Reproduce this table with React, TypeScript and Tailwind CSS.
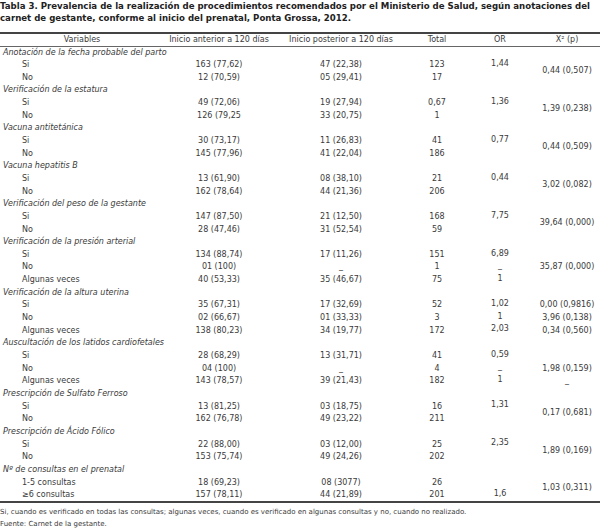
import React from "react";

type Row = { label: string; c1: string; c2: string; total: string; or: string; x2?: string };
type Group = { title: string; rows: Row[]; span?: string };

const groups: Group[] = [
  {
    title: "Anotación de la fecha probable del parto",
    rows: [
      { label: "Si", c1: "163 (77,62)", c2: "47 (22,38)", total: "123", or: "1,44" },
      { label: "No", c1: "12 (70,59)", c2: "05 (29,41)", total: "17", or: "" },
    ],
    span: "0,44 (0,507)",
  },
  {
    title: "Verificación de la estatura",
    rows: [
      { label: "Si", c1: "49 (72,06)", c2: "19 (27,94)", total: "0,67", or: "1,36" },
      { label: "No", c1: "126 (79,25", c2: "33 (20,75)", total: "1", or: "" },
    ],
    span: "1,39 (0,238)",
  },
  {
    title: "Vacuna antitetánica",
    rows: [
      { label: "Si", c1: "30 (73,17)", c2: "11 (26,83)", total: "41", or: "0,77" },
      { label: "No", c1: "145 (77,96)", c2: "41 (22,04)", total: "186", or: "" },
    ],
    span: "0,44 (0,509)",
  },
  {
    title: "Vacuna hepatitis B",
    rows: [
      { label: "Si", c1: "13 (61,90)", c2: "08 (38,10)", total: "21", or: "0,44" },
      { label: "No", c1: "162 (78,64)", c2: "44 (21,36)", total: "206", or: "" },
    ],
    span: "3,02 (0,082)",
  },
  {
    title: "Verificación del peso de la gestante",
    rows: [
      { label: "Si", c1: "147 (87,50)", c2: "21 (12,50)", total: "168", or: "7,75" },
      { label: "No", c1: "28 (47,46)", c2: "31 (52,54)", total: "59", or: "" },
    ],
    span: "39,64 (0,000)",
  },
  {
    title: "Verificación de la presión arterial",
    rows: [
      { label: "Si", c1: "134 (88,74)", c2: "17 (11,26)", total: "151", or: "6,89" },
      { label: "No", c1: "01 (100)", c2: "_", total: "1", or: "_" },
      { label: "Algunas veces", c1: "40 (53,33)", c2: "35 (46,67)", total: "75", or: "1" },
    ],
    span: "35,87 (0,000)",
  },
  {
    title: "Verificación de la altura uterina",
    rows: [
      { label: "Si", c1: "35 (67,31)", c2: "17 (32,69)", total: "52", or: "1,02", x2: "0,00 (0,9816)" },
      { label: "No", c1: "02 (66,67)", c2: "01 (33,33)", total: "3", or: "1", x2: "3,96 (0,138)" },
      { label: "Algunas veces", c1: "138 (80,23)", c2: "34 (19,77)", total: "172", or: "2,03", x2: "0,34 (0,560)" },
    ],
  },
  {
    title: "Auscultación de los latidos cardiofetales",
    rows: [
      { label: "Si", c1: "28 (68,29)", c2: "13 (31,71)", total: "41", or: "0,59", x2: "" },
      { label: "No", c1: "04 (100)", c2: "_", total: "4", or: "_", x2: "1,98 (0,159)" },
      { label: "Algunas veces", c1: "143 (78,57)", c2: "39 (21,43)", total: "182", or: "1", x2: "_" },
    ],
  },
  {
    title: "Prescripción de Sulfato Ferroso",
    rows: [
      { label: "Si", c1: "13 (81,25)", c2: "03 (18,75)", total: "16", or: "1,31" },
      { label: "No", c1: "162 (76,78)", c2: "49 (23,22)", total: "211", or: "" },
    ],
    span: "0,17 (0,681)",
  },
  {
    title: "Prescripción de Ácido Fólico",
    rows: [
      { label: "Si", c1: "22 (88,00)", c2: "03 (12,00)", total: "25", or: "2,35" },
      { label: "No", c1: "153 (75,74)", c2: "49 (24,26)", total: "202", or: "" },
    ],
    span: "1,89 (0,169)",
  },
  {
    title: "Nº de consultas en el prenatal",
    rows: [
      { label: "1-5 consultas", c1: "18 (69,23)", c2: "08 (3077)", total: "26", or: "" },
      { label: "≥6 consultas", c1: "157 (78,11)", c2: "44 (21,89)", total: "201", or: "1,6" },
    ],
    span: "1,03 (0,311)",
  },
];

const cell = "p-0 text-center align-middle whitespace-nowrap";

export default function App() {
  return (
    <div
      className="w-[600px] h-[529px] bg-white text-[#3a3a3a] overflow-hidden"
      style={{ fontFamily: '"DejaVu Sans", Verdana, sans-serif' }}
    >
      <div className="text-[8.6px] font-bold leading-[12px] text-[#222] whitespace-nowrap">
        Tabla 3. Prevalencia de la realización de procedimientos recomendados por el Ministerio de Salud, según anotaciones del
        <br />
        carnet de gestante, conforme al inicio del prenatal, Ponta Grossa, 2012.
      </div>
      <table className="mt-[8px] w-[600px] table-fixed border-collapse text-[8px] leading-[10px]">
        <colgroup>
          <col className="w-[164px]" />
          <col className="w-[110px]" />
          <col className="w-[134px]" />
          <col className="w-[58px]" />
          <col className="w-[68px]" />
          <col className="w-[66px]" />
        </colgroup>
        <thead>
          <tr className="h-[13px] border-t-2 border-b border-t-[#444] border-b-[#666]">
            <th className={`${cell} font-normal`}>Variables</th>
            <th className={`${cell} font-normal`}>Inicio anterior a 120 días</th>
            <th className={`${cell} font-normal`}>Inicio posterior a 120 días</th>
            <th className={`${cell} font-normal`}>Total</th>
            <th className={`${cell} font-normal`}>OR</th>
            <th className={`${cell} font-normal`}>X² (p)</th>
          </tr>
        </thead>
        <tbody className="border-b-2 border-b-[#444]">
          {groups.map((g) => (
            <React.Fragment key={g.title}>
              <tr className="h-[12.66px]">
                <td className="p-0 pl-[3px] italic whitespace-nowrap align-middle" colSpan={6}>
                  {g.title}
                </td>
              </tr>
              {g.rows.map((r, i) => (
                <tr key={r.label} className="h-[12.66px]">
                  <td className="p-0 pl-[22px] whitespace-nowrap align-middle">{r.label}</td>
                  <td className={cell}>{r.c1}</td>
                  <td className={cell}>{r.c2}</td>
                  <td className={cell}>{r.total}</td>
                  <td className="p-0 text-center align-top whitespace-nowrap">{r.or}</td>
                  {g.span !== undefined ? (
                    i === 0 ? (
                      <td className={cell} rowSpan={g.rows.length}>
                        {g.span}
                      </td>
                    ) : null
                  ) : (
                    <td className={cell}>{r.x2}</td>
                  )}
                </tr>
              ))}
            </React.Fragment>
          ))}
        </tbody>
      </table>
      <div className="mt-[3px] text-[7px] leading-[12px] whitespace-nowrap">
        Si, cuando es verificado en todas las consultas; algunas veces, cuando es verificado en algunas consultas y no, cuando no realizado.
      </div>
      <div className="text-[7px] leading-[12px] whitespace-nowrap">Fuente: Carnet de la gestante.</div>
    </div>
  );
}
